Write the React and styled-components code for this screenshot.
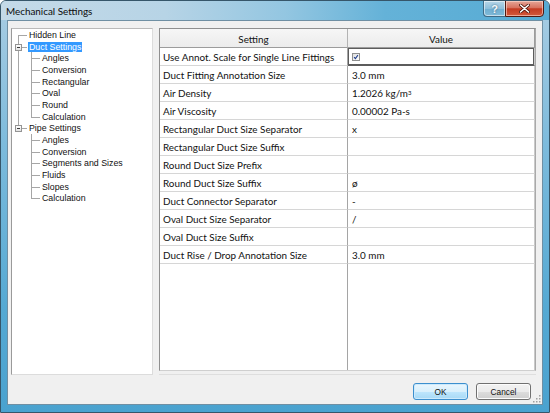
import React from 'react';
import styled, { createGlobalStyle, css } from 'styled-components';

const Global = createGlobalStyle`
  html, body { margin: 0; padding: 0; background: #ffffff; }
  body { width: 550px; height: 413px; overflow: hidden; }
  * { box-sizing: border-box; }
`;

const Window = styled.div`
  width: 550px;
  height: 413px;
  display: flex;
  flex-direction: column;
  border: 1px solid #36566a;
  border-radius: 6px 6px 0 0;
  background: linear-gradient(180deg, #a9cde3 0%, #7dbbdc 35%, #55a9d3 75%, #4aa2cf 100%);
  overflow: hidden;
`;

const TitleBar = styled.div`
  height: 19px;
  flex: none;
  display: flex;
  align-items: flex-start;
  margin: 0 -1px;
  padding: 0 6px 0 6px;
  background: linear-gradient(90deg, #c4dae8 0%, #b7d4e6 30%, #93c6e1 52%, #64b2d8 70%, #56abd4 100%);
`;

const Title = styled.div`
  flex: 1;
  padding-top: 4px;
  font-family: Lato, "Liberation Sans", sans-serif;
  font-size: 9.9px;
  color: #0b0b0b;
`;

const CaptionButtons = styled.div`
  display: flex;
  margin-top: -1px;
`;

const HelpButton = styled.div`
  width: 22px;
  height: 17px;
  display: flex;
  align-items: center;
  justify-content: center;
  border: 1px solid #3f6a84;
  border-right: none;
  border-radius: 0 0 0 4px;
  background: linear-gradient(180deg, #b7d6e8 0%, #8fbfdb 50%, #6faed1 51%, #7fbad8 100%);
  box-shadow: inset 0 0 0 1px rgba(255,255,255,0.55);
  color: #f4f8fb;
  font-family: "Liberation Sans", sans-serif;
  font-weight: bold;
  font-size: 11px;
  text-shadow: 0 0 2px #35607a;
`;

const CloseButton = styled.div`
  width: 39px;
  height: 17px;
  display: flex;
  align-items: center;
  justify-content: center;
  border: 1px solid #4f1a12;
  border-radius: 0 0 4px 0;
  background: linear-gradient(180deg, #e5a698 0%, #d7725f 45%, #c43b22 52%, #d25a3c 100%);
  box-shadow: inset 0 0 0 1px rgba(255,220,210,0.6);
`;

const Client = styled.div`
  position: relative;
  flex: 1;
  margin: 0 6px 7px 6px;
  display: flex;
  flex-direction: column;
  padding: 7px 6px 4px 3px;
  background: #f0f0f0;
  border: 1px solid #6f8fa3;
`;

const Main = styled.div`
  height: 347px;
  display: flex;
  gap: 6px;
`;

const TreePanel = styled.div`
  width: 142px;
  height: 100%;
  background: #ffffff;
  border: 1px solid #dcdcdc;
  border-left-color: #9a9a9a;
  border-top-color: #b9b9b9;
  padding-top: 0;
  font-family: "Liberation Sans", Arial, sans-serif;
  font-size: 8.8px;
  color: #111;
`;

const TreeRow = styled.div`
  display: flex;
  align-items: center;
  height: 11.7px;
`;

const Gutter = styled.span`
  position: relative;
  flex: none;
  align-self: stretch;
  width: ${p => p.$w}px;
  ${p => p.$v && css`
    &::before {
      content: '';
      position: absolute;
      left: ${p.$x}px;
      top: ${p.$v === 'bottom' ? '50%' : '0'};
      bottom: ${p.$v === 'top' ? '50%' : '0'};
      border-left: 1px solid #a6a6a6;
    }
  `}
  ${p => p.$h && css`
    &::after {
      content: '';
      position: absolute;
      left: ${p.$x}px;
      right: 1px;
      top: 50%;
      border-top: 1px solid #a6a6a6;
    }
  `}
`;

const Expander = styled.span`
  position: absolute;
  z-index: 1;
  left: 3px;
  top: 50%;
  width: 7px;
  height: 7px;
  margin-top: -3px;
  border: 1px solid #949494;
  background: linear-gradient(180deg, #ffffff, #e3e3e3);
  &::after {
    content: '';
    position: absolute;
    left: 1px;
    top: 2px;
    width: 3px;
    border-top: 1px solid #3b3b3b;
  }
`;

const TreeLabel = styled.span`
  line-height: 10px;
  padding: 0 1px;
  white-space: nowrap;
  ${p => p.$selected && css`
    background: #3399ff;
    color: #ffffff;
  `}
`;

const GridFrame = styled.div`
  flex: 1;
  height: 100%;
  display: flex;
  flex-direction: column;
  border-bottom: 1px solid #dedede;
  padding-bottom: 3px;
`;

const Grid = styled.div`
  flex: 1;
  display: flex;
  flex-direction: column;
  background: #ffffff;
  border: 1px solid #8f8f8f;
  border-right-color: #a9a9a9;
  border-bottom-color: #cfcfcf;
  font-family: Lato, "Liberation Sans", sans-serif;
  font-size: 9.9px;
  color: #111;
`;

const Row = styled.div`
  display: grid;
  grid-template-columns: 188px 1fr;
  height: ${p => p.$h || 18}px;
  flex: none;
`;

const HeaderCell = styled.div`
  display: flex;
  align-items: center;
  justify-content: center;
  background: linear-gradient(180deg, #f6f6f6 0%, #ececec 100%);
  border-bottom: 1px solid #9c9c9c;
  border-right: 1px solid ${p => (p.$last ? '#9c9c9c' : '#b3b3b3')};
  padding-top: 1px;
`;

const Cell = styled.div`
  display: flex;
  align-items: center;
  padding-left: ${p => (p.$value ? 4 : 3)}px;
  border-bottom: 1px solid #d6d6d6;
  border-right: 1px solid ${p => (p.$value ? '#c9c9c9' : '#a5a5a5')};
  white-space: nowrap;
  ${p => p.$focus && css`
    box-shadow: inset 0 0 0 1px #5c5c5c;
    border-bottom-color: #5c5c5c;
  `}
  sup {
    font-size: 6px;
    vertical-align: 4px;
  }
`;

const Filler = styled.div`
  flex: 1;
  display: grid;
  grid-template-columns: 188px 1fr;
`;

const FillerCell = styled.div`
  border-right: 1px solid ${p => (p.$value ? '#c9c9c9' : '#a5a5a5')};
`;

const Footer = styled.div`
  display: flex;
  justify-content: flex-end;
  gap: 8px;
  margin-top: 8px;
  padding-right: 5px;
`;

const Button = styled.div`
  width: 55px;
  height: 17px;
  display: flex;
  align-items: center;
  justify-content: center;
  border-radius: 3px;
  font-family: "Liberation Sans", Arial, sans-serif;
  font-size: 8.3px;
  color: #111;
  border: 1px solid ${p => (p.$default ? '#3c8fce' : '#707070')};
  background: ${p => p.$default
    ? 'linear-gradient(180deg, #eaf6fd 0%, #d9f0fc 50%, #bee6fd 51%, #a7d9f5 100%)'
    : 'linear-gradient(180deg, #f2f2f2 0%, #ebebeb 50%, #dddddd 51%, #cfcfcf 100%)'};
  box-shadow: inset 0 0 0 1px ${p => (p.$default ? '#cdeafc' : '#fcfcfc')};
`;

const SizeGrip = styled.svg`
  position: absolute;
  right: 0;
  bottom: 0;
`;

const Checkbox = () => (
  <svg width="8" height="8" viewBox="0 0 8 8">
    <defs>
      <linearGradient id="cbg" x1="0" y1="0" x2="1" y2="1">
        <stop offset="0" stopColor="#dcdcdc" />
        <stop offset="1" stopColor="#ffffff" />
      </linearGradient>
    </defs>
    <rect x="0.5" y="0.5" width="7" height="7" fill="url(#cbg)" stroke="#8e8f8f" />
    <path d="M2.1 4.1 L3.4 5.6 L5.9 2.2" fill="none" stroke="#23408e" strokeWidth="1.1" />
  </svg>
);

const tree = [
  { label: 'Hidden Line', g0: { v: 'bottom', h: true } },
  { label: 'Duct Settings', g0: { v: 'full', h: true, exp: true }, selected: true },
  { label: 'Angles', g0: { v: 'full' }, g1: { v: 'full' } },
  { label: 'Conversion', g0: { v: 'full' }, g1: { v: 'full' } },
  { label: 'Rectangular', g0: { v: 'full' }, g1: { v: 'full' } },
  { label: 'Oval', g0: { v: 'full' }, g1: { v: 'full' } },
  { label: 'Round', g0: { v: 'full' }, g1: { v: 'full' } },
  { label: 'Calculation', g0: { v: 'full' }, g1: { v: 'top' } },
  { label: 'Pipe Settings', g0: { v: 'top', h: true, exp: true } },
  { label: 'Angles', g0: {}, g1: { v: 'full' } },
  { label: 'Conversion', g0: {}, g1: { v: 'full' } },
  { label: 'Segments and Sizes', g0: {}, g1: { v: 'full' } },
  { label: 'Fluids', g0: {}, g1: { v: 'full' } },
  { label: 'Slopes', g0: {}, g1: { v: 'full' } },
  { label: 'Calculation', g0: {}, g1: { v: 'top' } },
];

const rows = [
  ['Use Annot. Scale for Single Line Fittings', <Checkbox />],
  ['Duct Fitting Annotation Size', '3.0 mm'],
  ['Air Density', <>1.2026 kg/m<sup>3</sup></>],
  ['Air Viscosity', '0.00002 Pa-s'],
  ['Rectangular Duct Size Separator', 'x'],
  ['Rectangular Duct Size Suffix', ''],
  ['Round Duct Size Prefix', ''],
  ['Round Duct Size Suffix', 'ø'],
  ['Duct Connector Separator', '-'],
  ['Oval Duct Size Separator', '/'],
  ['Oval Duct Size Suffix', ''],
  ['Duct Rise / Drop Annotation Size', '3.0 mm'],
];

export default function App() {
  return (
    <>
      <Global />
      <Window>
        <TitleBar>
          <Title>Mechanical Settings</Title>
          <CaptionButtons>
            <HelpButton>?</HelpButton>
            <CloseButton>
              <svg width="11" height="9" viewBox="0 0 11 9">
                <path d="M1.5 1 L9.5 8 M9.5 1 L1.5 8" stroke="#4a1208" strokeWidth="3" strokeLinecap="round" />
                <path d="M1.5 1 L9.5 8 M9.5 1 L1.5 8" stroke="#ffffff" strokeWidth="1.6" strokeLinecap="round" />
              </svg>
            </CloseButton>
          </CaptionButtons>
        </TitleBar>
        <Client>
          <Main>
            <TreePanel>
              {tree.map((n, i) => (
                <TreeRow key={i}>
                  <Gutter $w={16} $x={6} $v={n.g0.v} $h={n.g0.h}>
                    {n.g0.exp && <Expander />}
                  </Gutter>
                  {n.g1 && <Gutter $w={13} $x={3} $v={n.g1.v} $h />}
                  <TreeLabel $selected={n.selected}>{n.label}</TreeLabel>
                </TreeRow>
              ))}
            </TreePanel>
            <GridFrame>
              <Grid>
                <Row $h={19}>
                  <HeaderCell>Setting</HeaderCell>
                  <HeaderCell $last>Value</HeaderCell>
                </Row>
                {rows.map(([k, v], i) => (
                  <Row key={i}>
                    <Cell>{k}</Cell>
                    <Cell $value $focus={i === 0}>{v}</Cell>
                  </Row>
                ))}
                <Filler>
                  <FillerCell />
                  <FillerCell $value />
                </Filler>
              </Grid>
            </GridFrame>
          </Main>
          <Footer>
            <Button $default>OK</Button>
            <Button>Cancel</Button>
          </Footer>
          <SizeGrip width="10" height="10" viewBox="0 0 10 10">
            {[[7, 1], [7, 4], [4, 4], [7, 7], [4, 7], [1, 7]].map(([x, y], i) => (
              <rect key={i} x={x} y={y} width="1.5" height="1.5" fill="#a0a0a0" />
            ))}
          </SizeGrip>
        </Client>
      </Window>
    </>
  );
}
